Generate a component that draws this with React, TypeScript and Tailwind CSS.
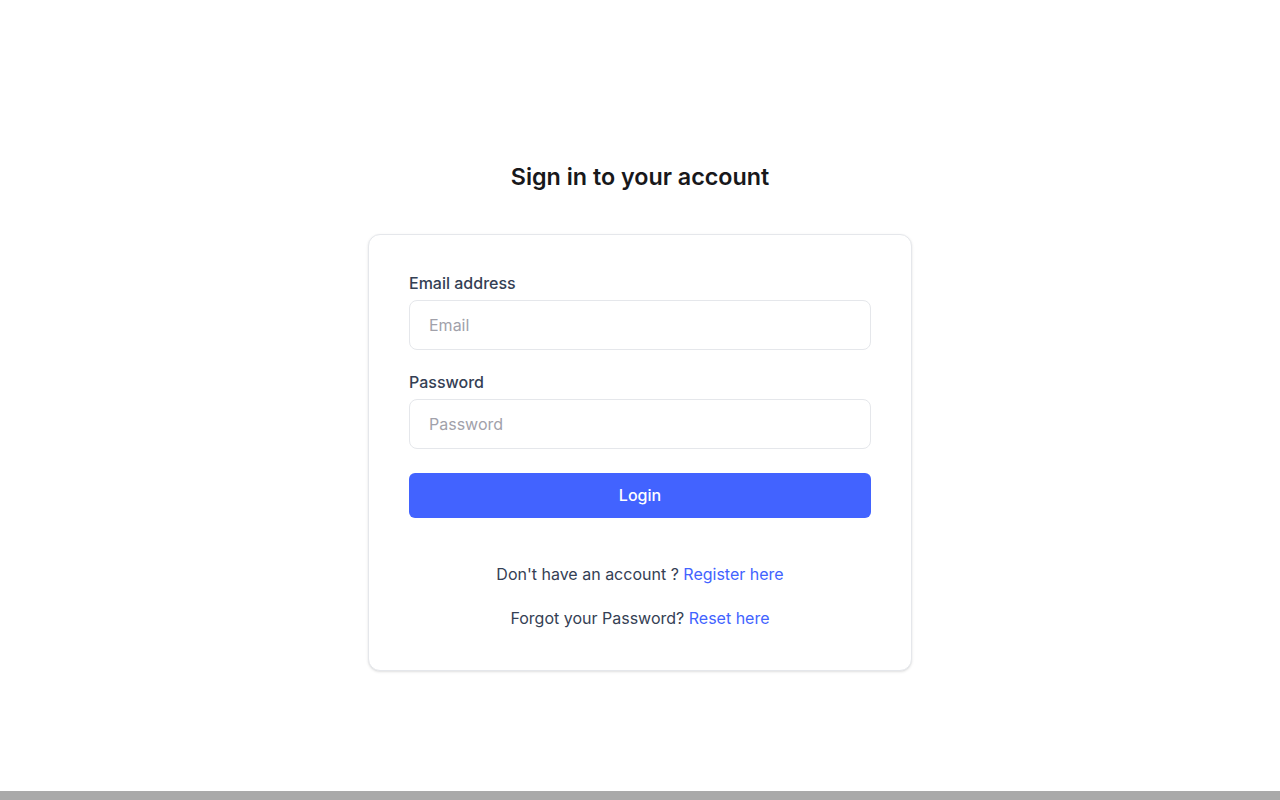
const App = () => {
  return (
    <div className="min-h-screen flex flex-col bg-white" style={{ fontFamily: 'Inter, "Noto Sans", sans-serif' }}>
      <div className="flex-1 flex flex-col items-center pt-[161px]">
        <h1 className="text-[23.3px] leading-8 font-semibold text-[#18181b] mb-[41px]">Sign in to your account</h1>

        <div className="w-[544px] bg-white border border-[#e5e7eb] rounded-xl shadow-sm px-10 pt-9 pb-10">
          <form className="flex flex-col" onSubmit={(e) => e.preventDefault()}>
            <label className="block text-base leading-6 font-medium text-[#344054] mb-[5px]">Email address</label>
            <input
              type="email"
              placeholder="Email"
              className="w-full h-[50px] px-[19px] border border-[#e5e7eb] rounded-lg text-base text-gray-900 placeholder:text-[#a1a1aa] outline-none"
            />

            <label className="block text-base leading-6 font-medium text-[#344054] mt-5 mb-[5px]">Password</label>
            <input
              type="password"
              placeholder="Password"
              className="w-full h-[50px] px-[19px] border border-[#e5e7eb] rounded-lg text-base text-gray-900 placeholder:text-[#a1a1aa] outline-none"
            />

            <button type="submit" className="mt-6 w-full h-[45px] pb-[2px] rounded-md bg-[#4263ff] text-white text-base font-medium">
              Login
            </button>

            <p className="mt-11 text-center text-base leading-6 text-[#344054]">
              Don't have an account ? <a href="#" className="text-[#4263ff]">Register here</a>
            </p>
            <p className="mt-5 text-center text-base leading-6 text-[#344054]">
              Forgot your Password? <a href="#" className="text-[#4263ff]">Reset here</a>
            </p>
          </form>
        </div>
      </div>
      <div className="h-[9px] bg-[#a9a9a9]" />
    </div>
  );
};

export default App;
